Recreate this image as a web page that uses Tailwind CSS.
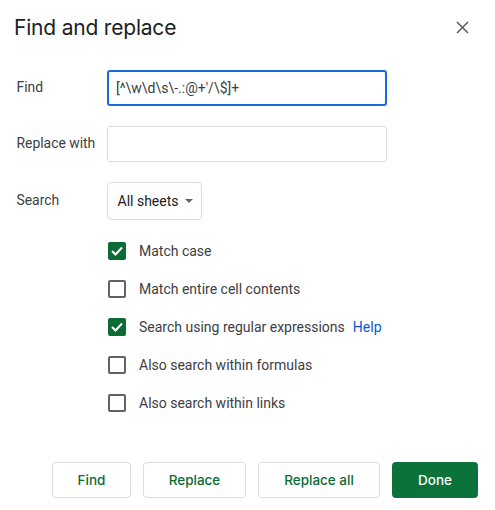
<!DOCTYPE html>
<html>
<head>
<meta charset="utf-8">
<script src="https://cdn.jsdelivr.net/npm/@tailwindcss/browser@4"></script>
</head>
<body class="bg-white">
<div class="relative flex h-[510px] w-[495px] flex-col overflow-hidden bg-white font-['Roboto',sans-serif] text-[14px] text-[#3c4043]">
  <div class="flex h-[70px] items-start justify-between pl-[14px] pr-[26px] pt-[13px]">
    <h1 class="font-['Inter',sans-serif] text-[21px] leading-[30px] font-normal tracking-[-0.2px] text-[#202124]">Find and replace</h1>
    <svg class="mt-[8px]" width="13" height="13" viewBox="0 0 13 13" fill="none" stroke="#5f6368" stroke-width="1.6"><path d="M1 1 12 12M12 1 1 12"/></svg>
  </div>
  <div class="flex h-[36px] items-center">
    <div class="w-[107px] pl-[16.5px] pb-[2px] text-[13.9px]">Find</div>
    <div class="flex h-[36px] w-[280px] items-center rounded-[3px] border-2 border-[#1a68e0] pl-[7px] text-[#3c4043]">[^\w\d\s\-.:@+'/\$]+</div>
  </div>
  <div class="mt-[20px] flex h-[36px] items-center">
    <div class="w-[107px] pl-[16.5px] pb-[2px] text-[13.9px]">Replace with</div>
    <div class="h-[36px] w-[280px] rounded-[3px] border border-[#dadce0]"></div>
  </div>
  <div class="mt-[20px] flex h-[38px] items-center">
    <div class="w-[107px] pl-[16.5px] pb-[2px] text-[13.9px]">Search</div>
    <div class="flex h-[38px] w-[95px] items-center rounded-[4px] border border-[#dadce0] pl-[9.5px] text-[#202124]">
      <span>All sheets</span>
      <svg class="ml-[6px]" width="8" height="4" viewBox="0 0 8 4"><path d="M0 0h8L4 4z" fill="#5f6368"/></svg>
    </div>
  </div>
  <div class="mt-[22px] flex flex-col gap-[20px] pl-[108px]">
    <div class="flex h-[18px] items-center gap-[13px]">
      <span class="flex h-[18px] w-[18px] items-center justify-center rounded-[2px] bg-[#0b6b35]"><svg width="12" height="10" viewBox="0 0 12 10" fill="none" stroke="#fff" stroke-width="2"><path d="M1 5l3.5 3.5L11 1.5"/></svg></span>
      <span>Match case</span>
    </div>
    <div class="flex h-[18px] items-center gap-[13px]">
      <span class="h-[18px] w-[18px] rounded-[2px] border-2 border-[#5f6368]"></span>
      <span>Match entire cell contents</span>
    </div>
    <div class="flex h-[18px] items-center gap-[13px]">
      <span class="flex h-[18px] w-[18px] items-center justify-center rounded-[2px] bg-[#0b6b35]"><svg width="12" height="10" viewBox="0 0 12 10" fill="none" stroke="#fff" stroke-width="2"><path d="M1 5l3.5 3.5L11 1.5"/></svg></span>
      <span>Search using regular expressions</span>
      <span class="-ml-[5px] text-[#0b57d0]">Help</span>
    </div>
    <div class="flex h-[18px] items-center gap-[13px]">
      <span class="h-[18px] w-[18px] rounded-[2px] border-2 border-[#5f6368]"></span>
      <span>Also search within formulas</span>
    </div>
    <div class="flex h-[18px] items-center gap-[13px]">
      <span class="h-[18px] w-[18px] rounded-[2px] border-2 border-[#5f6368]"></span>
      <span>Also search within links</span>
    </div>
  </div>
  <div class="mt-[50px] flex gap-[12px] pl-[52px] font-['Inter',sans-serif] text-[13.5px] font-medium text-[#0b6b35]">
    <button class="flex h-[36px] w-[79px] items-center justify-center rounded-[4px] border border-[#dadce0]">Find</button>
    <button class="flex h-[36px] w-[103px] items-center justify-center rounded-[4px] border border-[#dadce0]">Replace</button>
    <button class="flex h-[36px] w-[122px] items-center justify-center rounded-[4px] border border-[#dadce0]">Replace all</button>
    <button class="flex h-[36px] w-[86px] items-center justify-center rounded-[4px] bg-[#0b7339] text-white">Done</button>
  </div>
</div>
</body>
</html>
